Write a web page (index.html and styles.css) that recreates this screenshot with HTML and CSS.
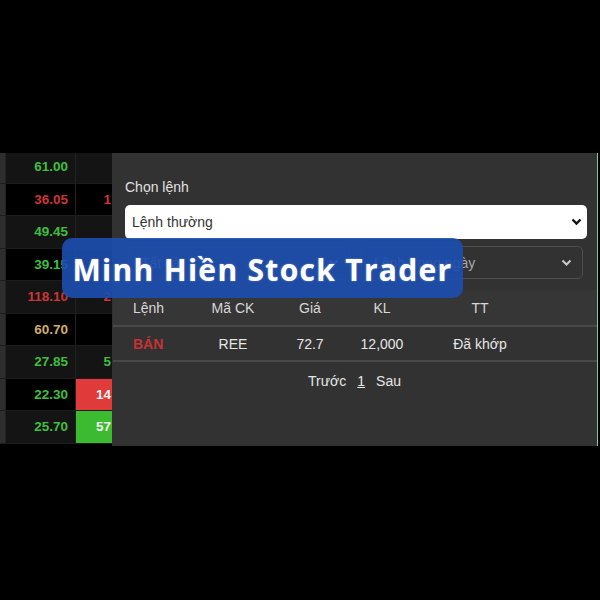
FILE: index.html
```html
<!DOCTYPE html>
<html lang="vi">
<head>
  <meta charset="UTF-8" />
  <meta name="viewport" content="width=device-width, initial-scale=1.0"/>
  <title>Minh Hiền Stock Trader</title>
  <link rel="stylesheet" href="styles.css">
</head>
<body>
  <div class="screen">
    <div class="board">
      <div class="row alt"><span class="edge"></span><span class="price up">61.00</span><span class="vol"></span></div>
      <div class="row"><span class="edge"></span><span class="price down">36.05</span><span class="vol down">1</span></div>
      <div class="row alt"><span class="edge"></span><span class="price up">49.45</span><span class="vol"></span></div>
      <div class="row"><span class="edge"></span><span class="price up">39.15</span><span class="vol"></span></div>
      <div class="row alt"><span class="edge"></span><span class="price down">118.10</span><span class="vol down">2</span></div>
      <div class="row"><span class="edge"></span><span class="price ref">60.70</span><span class="vol"></span></div>
      <div class="row alt"><span class="edge"></span><span class="price up">27.85</span><span class="vol up">5</span></div>
      <div class="row"><span class="edge"></span><span class="price up">22.30</span><span class="vol red-bg">14</span></div>
      <div class="row alt"><span class="edge"></span><span class="price up">25.70</span><span class="vol green-bg">57</span></div>
    </div>

    <div class="panel">
      <div class="label">Chọn lệnh</div>
      <div class="select light">
        <span>Lệnh thường</span>
        <svg width="11" height="8" viewBox="0 0 11 8"><path d="M1.5 1.5 L5.5 5.5 L9.5 1.5" fill="none" stroke="#111" stroke-width="2.4"/></svg>
      </div>
      <div class="filters">
        <div class="select dark">
          <span>Tất cả</span>
          <svg width="11" height="8" viewBox="0 0 11 8"><path d="M1.5 1.5 L5.5 5.5 L9.5 1.5" fill="none" stroke="#ccc" stroke-width="2"/></svg>
        </div>
        <div class="select dark">
          <span>Lệnh trong ngày</span>
          <svg width="11" height="8" viewBox="0 0 11 8"><path d="M1.5 1.5 L5.5 5.5 L9.5 1.5" fill="none" stroke="#ccc" stroke-width="2"/></svg>
        </div>
      </div>

      <div class="orders">
        <div class="tr head">
          <span class="first">Lệnh</span><span>Mã CK</span><span>Giá</span><span>KL</span><span>TT</span><span></span>
        </div>
        <div class="tr">
          <span class="first sell">BÁN</span><span>REE</span><span>72.7</span><span>12,000</span><span>Đã khớp</span><span></span>
        </div>
      </div>

      <div class="pager">
        <span>Trước</span><span class="page">1</span><span>Sau</span>
      </div>
    </div>

    <div class="banner">Minh Hiền Stock Trader</div>
  </div>
</body>
</html>
```

FILE: styles.css
```css
* { box-sizing: border-box; }

body {
  margin: 0;
  background-color: #000;
  font-family: 'Liberation Sans', Arial, sans-serif;
  color: #ddd;
}

.screen {
  position: relative;
  margin-top: 153px;
  height: 293px;
  display: flex;
  overflow: hidden;
}

/* price board on the left */
.board {
  width: 112px;
  flex-shrink: 0;
  display: flex;
  flex-direction: column;
  margin-top: -2px;
}

.row {
  height: 32.5px;
  display: grid;
  grid-template-columns: 6px 70px 36px;
  background-color: #000;
  border-bottom: 1px solid #1c1c1c;
}

.row.alt .price,
.row.alt .vol { background-color: #141414; }

.edge {
  background-color: #2e2e2e;
  border-right: 1px solid #222;
}

.price {
  display: flex;
  align-items: center;
  justify-content: flex-end;
  padding-right: 7px;
  font-size: 13.5px;
  font-weight: bold;
  border-right: 1px solid #222;
}

.vol {
  display: flex;
  align-items: center;
  justify-content: flex-end;
  font-size: 13.5px;
  font-weight: bold;
  overflow: hidden;
  padding-right: 1px;
}

.up { color: #3fbf3f; }
.down { color: #cf3434; }
.ref { color: #d2ad6a; }

.row .vol.red-bg { background-color: #e03a3a; color: #f4f4f4; }
.row .vol.green-bg { background-color: #3cba30; color: #f4f4f4; }

/* order panel */
.panel {
  width: 486px;
  flex-shrink: 0;
  background-color: #323232;
  border-right: 1px solid #86c4a6;
  padding-top: 26px;
}

.label {
  font-size: 14px;
  color: #e0e0e0;
  padding-left: 13px;
  margin-bottom: 10px;
}

.select {
  display: flex;
  align-items: center;
  justify-content: space-between;
  font-size: 14px;
  border-radius: 5px;
}

.select.light {
  margin: 0 10px 0 13px;
  height: 34px;
  background-color: #fff;
  color: #333;
  padding: 0 5px 0 7px;
}

.filters {
  display: flex;
  gap: 11px;
  margin: 7px 14px 0 16px;
}

.select.dark {
  flex: 1;
  height: 33px;
  border: 1px solid #4e4e4e;
  color: #aaa;
  padding: 0 10px 0 12px;
}

.orders {
  margin-top: 11px;
  margin-left: 1px;
}

.tr {
  display: grid;
  grid-template-columns: 81px 78px 76px 68px 128px 1fr;
  align-items: center;
  font-size: 14px;
  color: #e6e6e6;
  border-bottom: 2px solid #484848;
}

.tr.head {
  height: 37px;
  background-color: #363636;
  color: #d8d8d8;
}

.tr:not(.head) { height: 35px; }

.tr span { text-align: center; }

.tr .first {
  text-align: left;
  padding-left: 20px;
}

.sell {
  color: #c83232;
  font-weight: bold;
}

.pager {
  display: flex;
  justify-content: center;
  gap: 11px;
  margin-top: 11px;
  font-size: 14px;
  color: #e6e6e6;
}

.page { text-decoration: underline; }

/* title overlay */
.banner {
  position: absolute;
  left: 62px;
  top: 85px;
  width: 401px;
  height: 60px;
  border-radius: 10px;
  background-color: rgba(28, 78, 176, 0.9);
  color: #fff;
  font-family: 'Open Sans', sans-serif;
  font-weight: bold;
  font-size: 30px;
  letter-spacing: 1.3px;
  text-shadow: 0 0 2px rgba(255, 255, 255, 0.4);
  display: flex;
  align-items: center;
  justify-content: center;
  padding-top: 3px;
}
```
